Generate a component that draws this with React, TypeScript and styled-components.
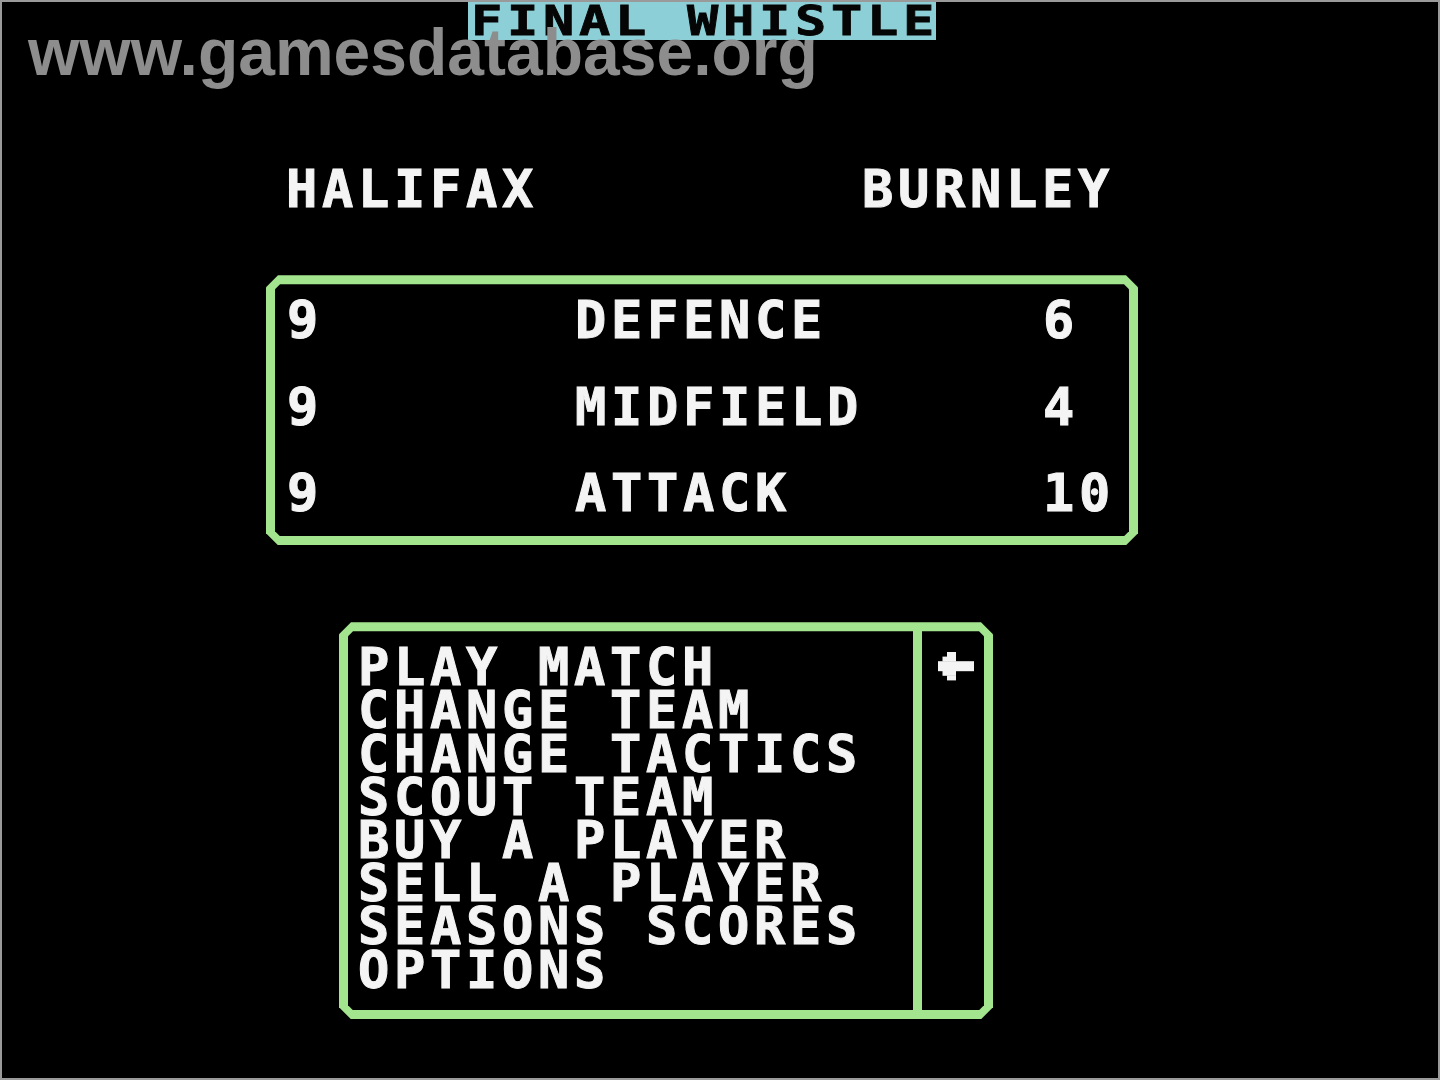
import styled, { createGlobalStyle } from "styled-components";

const CELL_H = 43.2;
const GREEN = "#a3e48e";

const GlobalStyle = createGlobalStyle`
  html, body {
    margin: 0;
    padding: 0;
    background: #000;
  }
`;

const stats = [
  { home: "9", label: "DEFENCE", away: "6" },
  { home: "9", label: "MIDFIELD", away: "4" },
  { home: "9", label: "ATTACK", away: "10" },
];

const menuItems = [
  "PLAY MATCH",
  "CHANGE TEAM",
  "CHANGE TACTICS",
  "SCOUT TEAM",
  "BUY A PLAYER",
  "SELL A PLAYER",
  "SEASONS SCORES",
  "OPTIONS",
];

const chamfer = (n: number) => `polygon(
  ${n}px 0, calc(100% - ${n}px) 0, 100% ${n}px, 100% calc(100% - ${n}px),
  calc(100% - ${n}px) 100%, ${n}px 100%, 0 calc(100% - ${n}px), 0 ${n}px
)`;

// PETSCII left arrow, drawn as chunky pixels
const LeftArrow = () => (
  <ArrowIcon width="40" height="30" viewBox="0 0 40 30">
    <g fill="#f4f4f4">
      <rect x="9" y="0" width="9" height="5" />
      <rect x="4.5" y="4.6" width="13.5" height="5" />
      <rect x="0" y="9.2" width="36" height="10" />
      <rect x="4.5" y="18.8" width="13.5" height="5" />
      <rect x="9" y="23.4" width="9" height="5" />
    </g>
  </ArrowIcon>
);

const App = () => {
  return (
    <>
      <GlobalStyle />
      <Screen>
        <Display>
          <TitleBar>
            <TitleText>FINAL WHISTLE</TitleText>
          </TitleBar>
          <TeamsRow>
            <Text>HALIFAX</Text>
            <Text>BURNLEY</Text>
          </TeamsRow>
          <StatsFrame>
            <StatsInner>
              {stats.map((s) => (
                <StatRow key={s.label}>
                  <Text>{s.home}</Text>
                  <Text>{s.label}</Text>
                  <Text>{s.away}</Text>
                </StatRow>
              ))}
            </StatsInner>
          </StatsFrame>
          <MenuFrame>
            <MenuPane $side="left">
              {menuItems.map((item) => (
                <Text key={item}>{item}</Text>
              ))}
            </MenuPane>
            <PointerPane $side="right">
              <LeftArrow />
            </PointerPane>
          </MenuFrame>
        </Display>
        <Watermark>www.gamesdatabase.org</Watermark>
      </Screen>
    </>
  );
};

const Screen = styled.div`
  position: relative;
  width: 1440px;
  height: 1080px;
  box-sizing: border-box;
  border: 2px solid #9a9a9a;
  background: #000;
  overflow: hidden;
`;

const Display = styled.div`
  display: flex;
  flex-direction: column;
  align-items: flex-start;
  filter: blur(0.6px);
  font-family: "DejaVu Sans Mono", monospace;
  font-weight: bold;
  font-size: 52px;
  letter-spacing: 4.7px;
`;

const Text = styled.div`
  height: ${CELL_H}px;
  line-height: ${CELL_H}px;
  color: #f4f4f4;
  -webkit-text-stroke: 1px #f4f4f4;
  white-space: pre;
`;

const TitleBar = styled.div`
  margin-left: 466px;
  width: 468px;
  height: 38px;
  box-sizing: border-box;
  padding-left: 3px;
  background: #8ccfd6;
  overflow: hidden;
`;

const TitleText = styled.div`
  height: 38px;
  line-height: 30px;
  color: #050505;
  -webkit-text-stroke: 1px #050505;
  white-space: pre;
  transform: scaleY(0.8);
  transform-origin: 0 33px;
`;

const TeamsRow = styled.div`
  margin-top: 128px;
  padding-left: 284px;
  display: grid;
  grid-template-columns: 576px auto;
`;

const StatsFrame = styled.div`
  margin-top: 64px;
  margin-left: 264px;
  width: 872px;
  height: 270px;
  box-sizing: border-box;
  padding: 9px;
  background: ${GREEN};
  clip-path: ${chamfer(12)};
`;

const StatsInner = styled.div`
  height: 100%;
  box-sizing: border-box;
  padding: 15px 0 0 12px;
  display: flex;
  flex-direction: column;
  gap: ${CELL_H}px;
  background: #000;
  clip-path: ${chamfer(5)};
`;

const StatRow = styled.div`
  display: grid;
  grid-template-columns: 288px 468px auto;
`;

const MenuFrame = styled.div`
  margin-top: 77px;
  margin-left: 337px;
  width: 654px;
  height: 397px;
  box-sizing: border-box;
  padding: 9px;
  display: grid;
  grid-template-columns: 565px 62px;
  gap: 9px;
  background: ${GREEN};
  clip-path: ${chamfer(12)};
`;

const Pane = styled.div<{ $side: "left" | "right" }>`
  background: #000;
  box-sizing: border-box;
  clip-path: ${({ $side }) =>
    $side === "left"
      ? "polygon(5px 0, 100% 0, 100% 100%, 5px 100%, 0 calc(100% - 5px), 0 5px)"
      : "polygon(0 0, calc(100% - 5px) 0, 100% 5px, 100% calc(100% - 5px), calc(100% - 5px) 100%, 0 100%)"};
`;

const MenuPane = styled(Pane)`
  padding: 15px 0 0 10px;
  display: flex;
  flex-direction: column;
`;

const PointerPane = styled(Pane)`
  padding: 21px 0 0 16px;
`;

const ArrowIcon = styled.svg`
  display: block;
`;

const Watermark = styled.div`
  position: absolute;
  left: 26px;
  top: 17px;
  font-family: "Liberation Sans", Arial, sans-serif;
  font-weight: bold;
  font-size: 66px;
  line-height: 66px;
  color: #8d8d8d;
  white-space: nowrap;
`;

export default App;
